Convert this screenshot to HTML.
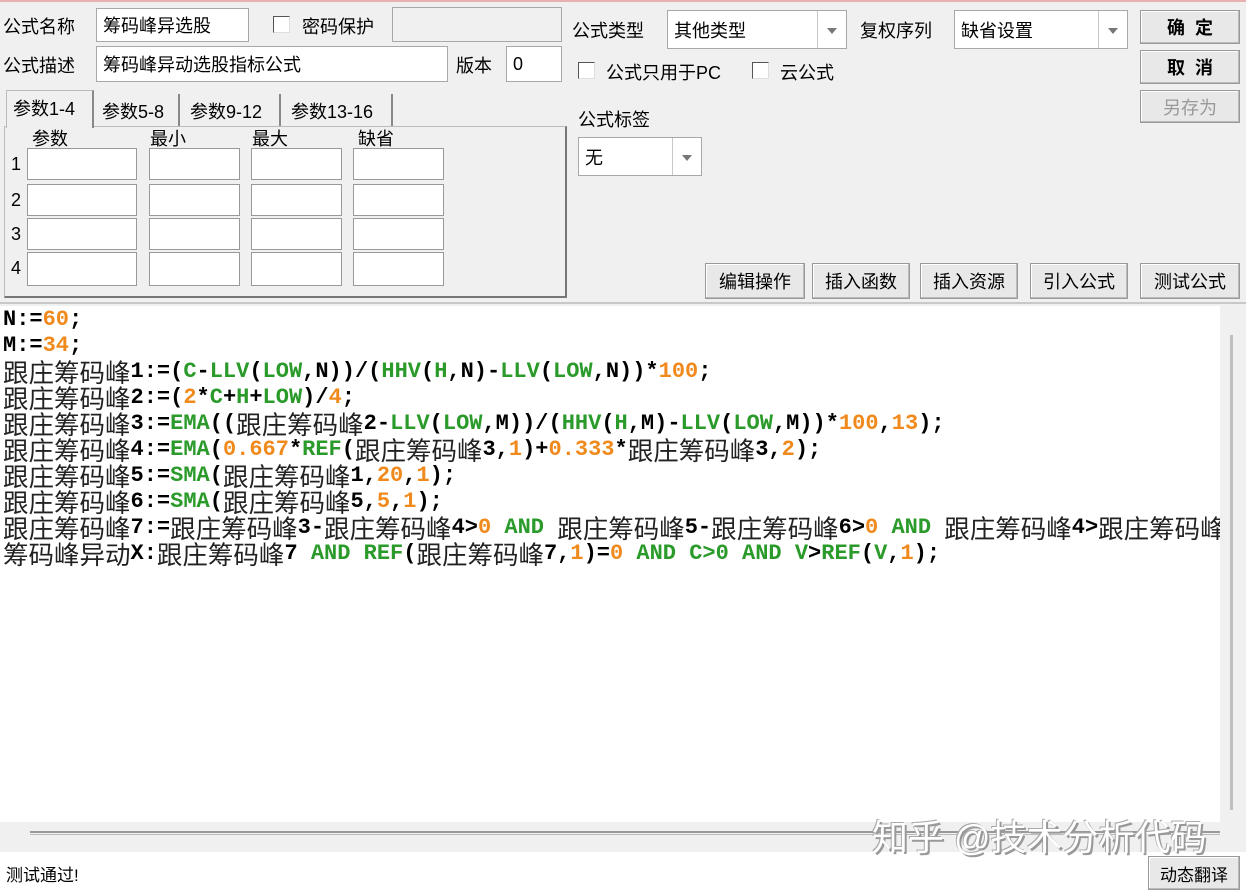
<!DOCTYPE html>
<html><head><meta charset="utf-8">
<style>
*{margin:0;padding:0;box-sizing:border-box}
body{width:1246px;height:892px;overflow:hidden;background:#f0f0f0;font-family:"Liberation Sans","Noto Sans CJK SC",sans-serif;font-size:18px;color:#000;position:relative}
.a{position:absolute;white-space:nowrap}
.in{position:absolute;background:#fff;border:1px solid #a8a8a8;font-size:18px;padding-left:6px;display:flex;align-items:center}
.cb{position:absolute;width:17px;height:17px;border:1px solid #555;background:#fff;border-right-color:#ddd;border-bottom-color:#ddd}
.btn{position:absolute;background:#e8e8e8;border:1px solid #999;box-shadow:inset -1px -1px 0 #bbb,inset 1px 1px 0 #fff;display:flex;align-items:center;justify-content:center;font-size:18px}
.dd{position:absolute;top:0;right:0;bottom:0;width:29px;border-left:1px solid #c8c8c8}
.dd:after{content:"";position:absolute;left:9px;top:50%;margin-top:-2px;border-left:5px solid transparent;border-right:5px solid transparent;border-top:6px solid #777}
.cell{position:absolute;background:#fff;border:1px solid #999;height:32px}
#ed{position:absolute;left:0;top:306px;width:1220px;height:516px;background:#fff;overflow:hidden;padding-top:1px}
.l{height:26px;line-height:26px;white-space:nowrap;font-family:"Liberation Mono",monospace;font-weight:bold;font-size:22px;padding-left:3px}
.c{font-family:"Noto Sans CJK SC",sans-serif;font-weight:normal;font-size:25.5px;display:inline-block;line-height:26px;vertical-align:top;color:#222}
.g{color:#2a9a2a}.o{color:#f08a1c}
</style></head><body>
<div class="a" style="left:0;top:0;width:1246px;height:2px;background:#e8b0b0"></div>
<div class="a" style="left:3px;top:13px">公式名称</div>
<div class="in" style="left:96px;top:8px;width:153px;height:34px">筹码峰异选股</div>
<div class="cb" style="left:273px;top:16px"></div>
<div class="a" style="left:302px;top:13px">密码保护</div>
<div class="in" style="left:392px;top:7px;width:170px;height:35px;background:#f0f0f0"></div>
<div class="a" style="left:3px;top:52px">公式描述</div>
<div class="in" style="left:96px;top:46px;width:352px;height:36px">筹码峰异动选股指标公式</div>
<div class="a" style="left:456px;top:52px">版本</div>
<div class="in" style="left:506px;top:46px;width:56px;height:36px">0</div>

<div class="a" style="left:4px;top:126px;width:563px;height:172px;border:1px solid #bbb;border-right:2px solid #777;border-bottom:2px solid #777;background:#f0f0f0"></div>
<div class="a" style="left:6px;top:90px;width:88px;height:38px;border:1px solid #bbb;border-bottom:none;border-right:2px solid #888;background:#f0f0f0;padding:4px 0 0 6px">参数1-4</div>
<div class="a" style="left:96px;top:94px;width:84px;height:32px;border-right:2px solid #888;padding:4px 0 0 6px">参数5-8</div>
<div class="a" style="left:184px;top:94px;width:97px;height:32px;border-right:2px solid #888;padding:4px 0 0 6px">参数9-12</div>
<div class="a" style="left:285px;top:94px;width:108px;height:32px;border-right:2px solid #888;padding:4px 0 0 6px">参数13-16</div>
<div class="a" style="left:32px;top:125px">参数</div>
<div class="a" style="left:150px;top:125px">最小</div>
<div class="a" style="left:252px;top:125px">最大</div>
<div class="a" style="left:358px;top:125px">缺省</div>
<div class="a" style="left:11px;top:154px">1</div>
<div class="a" style="left:11px;top:190px">2</div>
<div class="a" style="left:11px;top:224px">3</div>
<div class="a" style="left:11px;top:258px">4</div>
<div class="cell" style="left:27px;top:148px;width:110px"></div><div class="cell" style="left:149px;top:148px;width:91px"></div><div class="cell" style="left:251px;top:148px;width:91px"></div><div class="cell" style="left:353px;top:148px;width:91px"></div>
<div class="cell" style="left:27px;top:184px;width:110px"></div><div class="cell" style="left:149px;top:184px;width:91px"></div><div class="cell" style="left:251px;top:184px;width:91px"></div><div class="cell" style="left:353px;top:184px;width:91px"></div>
<div class="cell" style="left:27px;top:218px;width:110px"></div><div class="cell" style="left:149px;top:218px;width:91px"></div><div class="cell" style="left:251px;top:218px;width:91px"></div><div class="cell" style="left:353px;top:218px;width:91px"></div>
<div class="cell" style="left:27px;top:252px;width:110px;height:34px"></div><div class="cell" style="left:149px;top:252px;width:91px;height:34px"></div><div class="cell" style="left:251px;top:252px;width:91px;height:34px"></div><div class="cell" style="left:353px;top:252px;width:91px;height:34px"></div>

<div class="a" style="left:572px;top:17px">公式类型</div>
<div class="in" style="left:667px;top:10px;width:180px;height:39px">其他类型<div class="dd"></div></div>
<div class="a" style="left:860px;top:17px">复权序列</div>
<div class="in" style="left:954px;top:10px;width:174px;height:39px">缺省设置<div class="dd"></div></div>
<div class="btn" style="left:1140px;top:10px;width:100px;height:34px;font-weight:bold">确&nbsp;&nbsp;定</div>
<div class="btn" style="left:1140px;top:50px;width:100px;height:34px;font-weight:bold">取&nbsp;&nbsp;消</div>
<div class="btn" style="left:1140px;top:90px;width:100px;height:33px;color:#999">另存为</div>
<div class="cb" style="left:578px;top:62px"></div>
<div class="a" style="left:606px;top:59px">公式只用于PC</div>
<div class="cb" style="left:752px;top:62px"></div>
<div class="a" style="left:780px;top:59px">云公式</div>
<div class="a" style="left:578px;top:106px">公式标签</div>
<div class="in" style="left:578px;top:137px;width:124px;height:39px">无<div class="dd"></div></div>
<div class="btn" style="left:705px;top:263px;width:100px;height:36px">编辑操作</div>
<div class="btn" style="left:812px;top:263px;width:98px;height:36px">插入函数</div>
<div class="btn" style="left:920px;top:263px;width:98px;height:36px">插入资源</div>
<div class="btn" style="left:1030px;top:263px;width:98px;height:36px">引入公式</div>
<div class="btn" style="left:1140px;top:263px;width:100px;height:36px">测试公式</div>
<div class="a" style="left:0;top:302px;width:1246px;height:2px;background:#c8c8c8"></div>

<div id="ed">
<div class="l">N:=<span class="o">60</span>;</div>
<div class="l">M:=<span class="o">34</span>;</div>
<div class="l"><span class="c">跟庄筹码峰</span>1:=(<span class="g">C</span>-<span class="g">LLV</span>(<span class="g">LOW</span>,N))/(<span class="g">HHV</span>(<span class="g">H</span>,N)-<span class="g">LLV</span>(<span class="g">LOW</span>,N))*<span class="o">100</span>;</div>
<div class="l"><span class="c">跟庄筹码峰</span>2:=(<span class="o">2</span>*<span class="g">C</span>+<span class="g">H</span>+<span class="g">LOW</span>)/<span class="o">4</span>;</div>
<div class="l"><span class="c">跟庄筹码峰</span>3:=<span class="g">EMA</span>((<span class="c">跟庄筹码峰</span>2-<span class="g">LLV</span>(<span class="g">LOW</span>,M))/(<span class="g">HHV</span>(<span class="g">H</span>,M)-<span class="g">LLV</span>(<span class="g">LOW</span>,M))*<span class="o">100</span>,<span class="o">13</span>);</div>
<div class="l"><span class="c">跟庄筹码峰</span>4:=<span class="g">EMA</span>(<span class="o">0.667</span>*<span class="g">REF</span>(<span class="c">跟庄筹码峰</span>3,<span class="o">1</span>)+<span class="o">0.333</span>*<span class="c">跟庄筹码峰</span>3,<span class="o">2</span>);</div>
<div class="l"><span class="c">跟庄筹码峰</span>5:=<span class="g">SMA</span>(<span class="c">跟庄筹码峰</span>1,<span class="o">20</span>,<span class="o">1</span>);</div>
<div class="l"><span class="c">跟庄筹码峰</span>6:=<span class="g">SMA</span>(<span class="c">跟庄筹码峰</span>5,<span class="o">5</span>,<span class="o">1</span>);</div>
<div class="l"><span class="c">跟庄筹码峰</span>7:=<span class="c">跟庄筹码峰</span>3-<span class="c">跟庄筹码峰</span>4&gt;<span class="o">0</span> <span class="g">AND</span> <span class="c">跟庄筹码峰</span>5-<span class="c">跟庄筹码峰</span>6&gt;<span class="o">0</span> <span class="g">AND</span> <span class="c">跟庄筹码峰</span>4&gt;<span class="c">跟庄筹码峰</span>7</div>
<div class="l"><span class="c">筹码峰异动</span>X:<span class="c">跟庄筹码峰</span>7 <span class="g">AND</span> <span class="g">REF</span>(<span class="c">跟庄筹码峰</span>7,<span class="o">1</span>)=<span class="o">0</span> <span class="g">AND</span> <span class="g">C&gt;0</span> <span class="g">AND</span> <span class="g">V</span>&gt;<span class="g">REF</span>(<span class="g">V</span>,<span class="o">1</span>);</div>
</div>
<div class="a" style="left:1220px;top:306px;width:26px;height:546px;background:#f0f0f0"></div>
<div class="a" style="left:1230px;top:335px;width:3px;height:475px;background:#c0c0c0"></div>
<div class="a" style="left:0;top:822px;width:1220px;height:30px;background:#f0f0f0"></div>
<div class="a" style="left:30px;top:831px;width:1190px;height:4px;border-top:2px solid #999;border-bottom:1px solid #bbb"></div>
<div class="a" style="left:0;top:852px;width:1246px;height:40px;background:#fff"></div>
<div class="a" style="left:6px;top:861px;font-size:17px">测试通过!</div>
<div class="btn" style="left:1148px;top:856px;width:92px;height:34px;font-size:17px">动态翻译</div>
<div class="a" style="left:872px;top:814px;font-size:36px;line-height:48px;color:#fff;text-shadow:2px 2px 0 #999,-1px -1px 0 #aaa">知乎 @技术分析代码</div>
</body></html>
